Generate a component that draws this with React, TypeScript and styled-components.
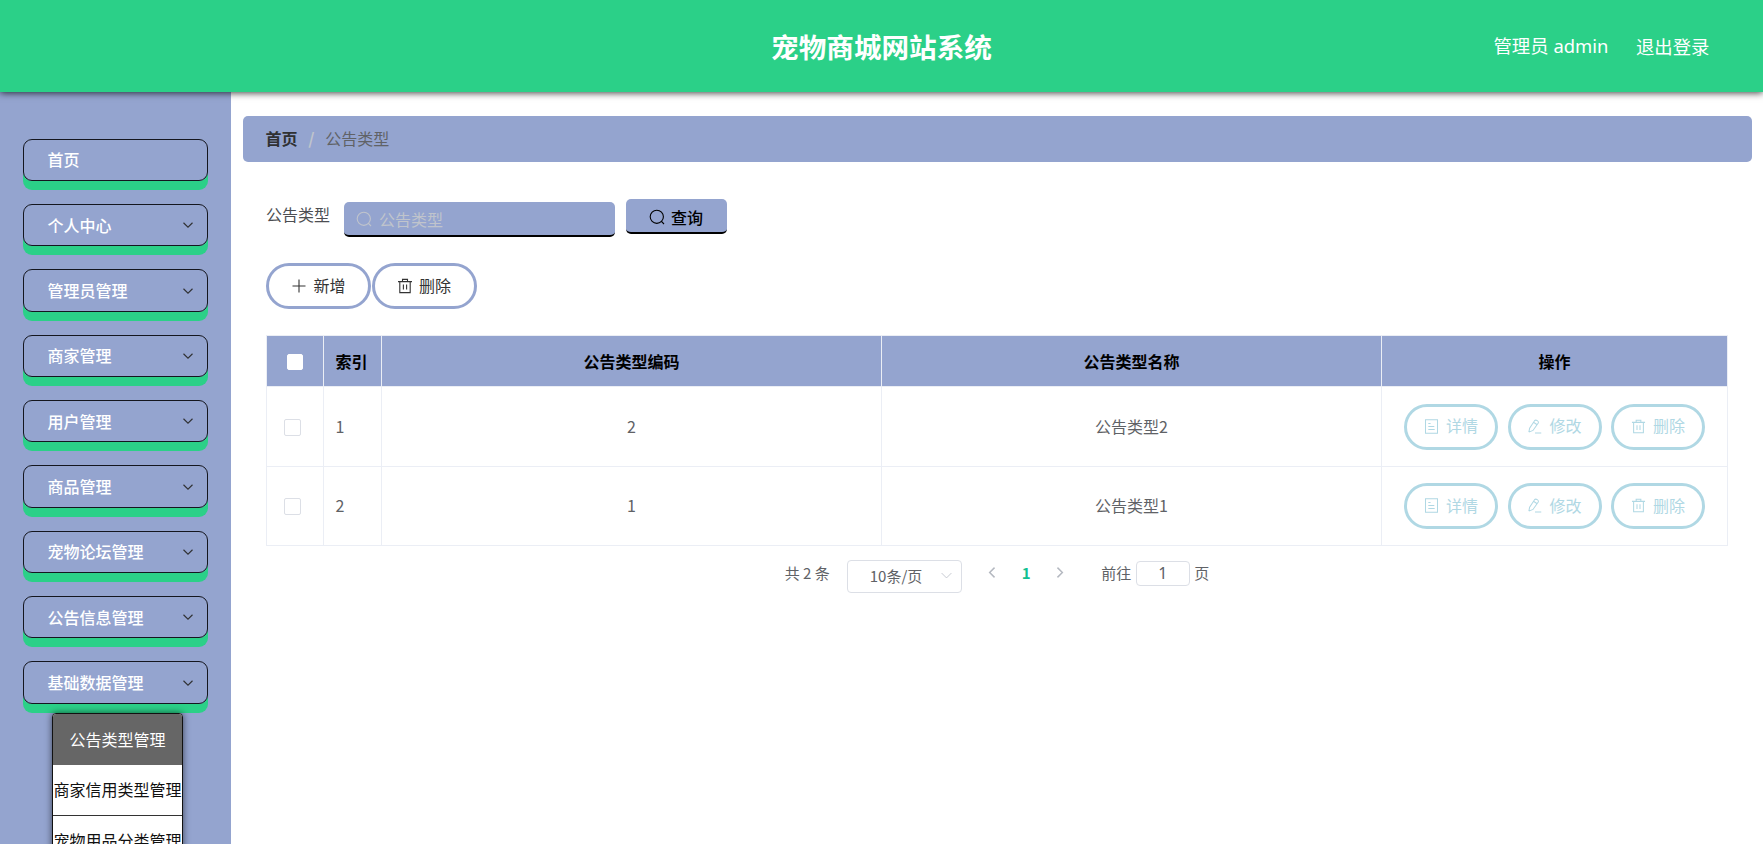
import React from 'react';
import styled, { createGlobalStyle } from 'styled-components';

const BLUE = '#94a4cf';
const GREEN = '#2bd088';
const LIGHT = '#b0d8e4';
const LINE = '#ebeef5';

const GlobalStyle = createGlobalStyle`
  *, *::before, *::after { box-sizing: border-box; }
  html, body { margin: 0; height: 100%; overflow: hidden; background: #fff; }
  body { font-family: "Noto Sans CJK SC", "Noto Sans", sans-serif; font-size: 16px; color: #606266; }
  button, input { font: inherit; color: inherit; }
`;

const Page = styled.div`
  height: 844px;
  display: flex;
  flex-direction: column;
  overflow: hidden;
`;

const Header = styled.header`
  flex: none;
  height: 92px;
  display: grid;
  grid-template-columns: 1fr auto 1fr;
  align-items: center;
  padding: 0 53px;
  background: ${GREEN};
  color: #fff;
  box-shadow: 0 1px 7px rgba(0, 0, 0, 0.75);
  z-index: 2;
`;

const Title = styled.h1`
  grid-column: 2;
  margin: 0;
  font-size: 27.6px;
  line-height: 40px;
  font-weight: 700;
`;

const Account = styled.div`
  display: flex;
  justify-content: flex-end;
  gap: 27.6px;
  padding-right: 0.5px;
  padding-bottom: 1px;
  font-size: 18.4px;
  line-height: 28px;
`;

const UserName = styled.span`
  font-family: "Noto Sans", "Noto Sans CJK SC", sans-serif;
`;

const Body = styled.div`
  flex: 1;
  min-height: 0;
  display: flex;
`;

const Sidebar = styled.nav`
  flex: none;
  width: 231px;
  padding: 46.6px 23px 0;
  background: ${BLUE};
  overflow: hidden;
`;

const MenuItem = styled.div`
  display: flex;
  align-items: center;
  justify-content: space-between;
  height: 42.5px;
  margin-bottom: 22.84px;
  padding: 0 13px 1px 23.5px;
  border: 1px solid #14161f;
  border-radius: 9px;
  box-shadow: 0 9px 0 ${GREEN};
  color: #fff;
  font-weight: 500;
  line-height: 24px;
`;

const SubMenu = styled.div`
  width: 131px;
  margin: -13.4px 0 0 29px;
  border: 1px solid #111;
  border-radius: 4px 4px 0 0;
  background: #fff;
  box-shadow: 0 0 7px rgba(0, 0, 0, 0.6);
  overflow: hidden;
  position: relative;
`;

const SubItem = styled.div<{ $active?: boolean }>`
  display: flex;
  align-items: center;
  justify-content: center;
  height: ${p => (p.$active ? 51 : 50.5)}px;
  padding-bottom: 1px;
  border-bottom: ${p => (p.$active ? 'none' : '1px solid #333')};
  background: ${p => (p.$active ? '#666' : '#fff')};
  color: ${p => (p.$active ? '#fff' : '#111')};
  white-space: nowrap;
`;

const Main = styled.main`
  flex: 1;
  min-width: 0;
  padding: 23.5px 11px 0 12px;
`;

const Breadcrumb = styled.div`
  display: flex;
  align-items: center;
  height: 46px;
  padding: 0 22.6px 1.5px;
  border-radius: 5px;
  background: ${BLUE};
`;

const Crumb = styled.span<{ $home?: boolean }>`
  font-weight: ${p => (p.$home ? 700 : 400)};
  color: ${p => (p.$home ? '#303133' : '#606266')};
`;

const Slash = styled.span`
  width: 27.6px;
  text-align: center;
  font-weight: 700;
  color: #c0c4cc;
`;

const Content = styled.section`
  padding: 36.5px 24px 0 23px;
`;

const SearchRow = styled.div`
  display: flex;
  align-items: flex-start;
  height: 65px;
`;

const Label = styled.label`
  width: 78px;
  padding-top: 4.2px;
  line-height: 24px;
  color: #4c4e52;
`;

const SearchBox = styled.div`
  display: flex;
  align-items: center;
  gap: 7px;
  width: 271px;
  height: 35px;
  margin: 4px 11px 0 0;
  padding: 0 12px;
  border-bottom: 2px solid #000;
  border-radius: 5px;
  background: ${BLUE};
  color: #c0c4cc;
`;

const SearchInput = styled.input`
  flex: 1;
  min-width: 0;
  padding: 0;
  border: 0;
  outline: 0;
  background: transparent;
  &::placeholder { color: #c0c4cc; opacity: 1; }
`;

const QueryButton = styled.button`
  display: flex;
  align-items: center;
  justify-content: center;
  gap: 6px;
  width: 101px;
  height: 35px;
  margin-top: 0.5px;
  padding: 4px 1px 0 0;
  border: 0;
  border-bottom: 2px solid #000;
  border-radius: 5px;
  background: ${BLUE};
  color: #000;
  font-weight: 500;
`;

const Toolbar = styled.div`
  display: flex;
  gap: 0.5px;
  height: 72px;
`;

const PillButton = styled.button<{ $light?: boolean }>`
  display: flex;
  align-items: center;
  justify-content: center;
  gap: ${p => (p.$light ? 7 : 6)}px;
  width: ${p => (p.$light ? 94 : 105)}px;
  height: 46px;
  padding: 0 0 2.5px;
  border: 3px solid ${p => (p.$light ? LIGHT : BLUE)};
  border-radius: 23px;
  background: #fff;
  color: ${p => (p.$light ? LIGHT : '#333')};

  svg { margin-top: 2px; }
`;

const Table = styled.div`
  border-left: 1px solid ${LINE};
  border-right: 1px solid ${LINE};
  border-top: 1px solid ${LINE};
`;

const Row = styled.div<{ $head?: boolean }>`
  display: grid;
  grid-template-columns: 57px 58px 500px 500px 1fr;
  height: ${p => (p.$head ? 51 : 79.5)}px;
  background: ${p => (p.$head ? BLUE : '#fff')};
  color: ${p => (p.$head ? '#000' : '#606266')};
  font-weight: ${p => (p.$head ? 700 : 400)};
`;

const Cell = styled.div<{ $left?: boolean }>`
  display: flex;
  align-items: center;
  justify-content: ${p => (p.$left ? 'flex-start' : 'center')};
  padding: 0 ${p => (p.$left ? 11.5 : 0)}px 1px;
  border-right: 1px solid ${LINE};
  border-bottom: 1px solid ${LINE};
  &:last-child { border-right: 0; }
`;

const Actions = styled.div`
  display: flex;
  gap: 9.5px;
  padding-top: 1.5px;
`;

const Check = styled.span<{ $head?: boolean }>`
  width: ${p => (p.$head ? 16 : 17)}px;
  height: ${p => (p.$head ? 16 : 17)}px;
  margin: ${p => (p.$head ? '3px 0 0 0' : '3px 5px 0 0')};
  border: 1px solid ${p => (p.$head ? '#fff' : '#dcdfe6')};
  border-radius: 2px;
  background: #fff;
`;

const Pagination = styled.div`
  display: flex;
  justify-content: center;
  align-items: flex-start;
  padding: 13.5px 0 0 0;
  font-size: 15px;
  line-height: 26px;
`;

const Total = styled.span`
  width: 62.5px;
`;

const SizeSelect = styled.div`
  display: flex;
  align-items: center;
  justify-content: space-between;
  width: 115px;
  height: 33px;
  padding: 0 8px 1px 21.5px;
  border: 1px solid #dcdfe6;
  border-radius: 4px;
  color: #606266;

  svg { color: #c0c4cc; }
`;

const Pager = styled.div`
  display: flex;
  align-items: center;
  justify-content: space-between;
  width: 80px;
  height: 26px;
  margin: 0 35px 0 24px;
  color: #b4b8c0;
`;

const CurrentPage = styled.b`
  color: #13c091;
`;

const PageInput = styled.input`
  width: 54px;
  height: 25px;
  margin: 1px 4.5px 0 4.5px;
  padding: 0;
  border: 1px solid #dcdfe6;
  border-radius: 4px;
  text-align: center;
  font-family: "Noto Sans", sans-serif;
  font-size: 16px;
`;

type IconName = 'search' | 'plus' | 'trash' | 'doc' | 'edit' | 'down' | 'left' | 'right';

const paths: Record<IconName, React.ReactNode> = {
  search: (
    <>
      <circle cx="7.8" cy="7.8" r="6.6" />
      <path d="M12.2 12.2L15 15" />
    </>
  ),
  plus: <path d="M8 1.5V14.5M1.5 8H14.5" />,
  trash: <path d="M1 3.6H15M5.5 3.6V1.4H10.5V3.6M2.8 3.6V14.6H13.2V3.6M6.4 6.6V11.6M9.6 6.6V11.6" />,
  doc: <path d="M1.6 .8H14.4V15.2H1.6ZM4.6 4.7H7M4.6 8H11M4.6 11.3H11.4" />,
  edit: <path d="M2 14L2.8 9.8L8.2 1.6C9.6 .4 12.8 2.4 12 4.2L6.4 12.2L2 14M7 3.5L10.8 6.1M8.5 15H15.2" />,
  down: <path d="M2 5L8 11L14 5" />,
  left: <path d="M10.5 2L4.5 8L10.5 14" />,
  right: <path d="M5.5 2L11.5 8L5.5 14" />,
};

function Icon({ name, size = 16, stroke = 1.1 }: { name: IconName; size?: number; stroke?: number }) {
  return (
    <svg width={size} height={size} viewBox="0 0 16 16" fill="none" stroke="currentColor" strokeWidth={stroke}>
      {paths[name]}
    </svg>
  );
}

const MenuArrow = styled.span`
  display: flex;
  padding-top: 1.5px;
  color: #303133;
`;

const menu = ['首页', '个人中心', '管理员管理', '商家管理', '用户管理', '商品管理', '宠物论坛管理', '公告信息管理', '基础数据管理'];
const subMenu = ['公告类型管理', '商家信用类型管理', '宠物用品分类管理'];
const rows = [
  { index: 1, code: 2, name: '公告类型2' },
  { index: 2, code: 1, name: '公告类型1' },
];

export default function App() {
  return (
    <Page>
      <GlobalStyle />
      <Header>
        <Title>宠物商城网站系统</Title>
        <Account>
          <UserName>管理员 admin</UserName>
          <span>退出登录</span>
        </Account>
      </Header>
      <Body>
        <Sidebar>
          {menu.map((label, i) => (
            <MenuItem key={label}>
              <span>{label}</span>
              {i > 0 && <MenuArrow><Icon name="down" size={12} stroke={1.5} /></MenuArrow>}
            </MenuItem>
          ))}
          <SubMenu>
            {subMenu.map((label, i) => (
              <SubItem key={label} $active={i === 0}>{label}</SubItem>
            ))}
          </SubMenu>
        </Sidebar>
        <Main>
          <Breadcrumb>
            <Crumb $home>首页</Crumb>
            <Slash>/</Slash>
            <Crumb>公告类型</Crumb>
          </Breadcrumb>
          <Content>
            <SearchRow>
              <Label>公告类型</Label>
              <SearchBox>
                <Icon name="search" />
                <SearchInput placeholder="公告类型" />
              </SearchBox>
              <QueryButton><Icon name="search" />查询</QueryButton>
            </SearchRow>
            <Toolbar>
              <PillButton><Icon name="plus" />新增</PillButton>
              <PillButton><Icon name="trash" />删除</PillButton>
            </Toolbar>
            <Table>
              <Row $head>
                <Cell><Check $head /></Cell>
                <Cell $left>索引</Cell>
                <Cell>公告类型编码</Cell>
                <Cell>公告类型名称</Cell>
                <Cell>操作</Cell>
              </Row>
              {rows.map(row => (
                <Row key={row.index}>
                  <Cell><Check /></Cell>
                  <Cell $left>{row.index}</Cell>
                  <Cell>{row.code}</Cell>
                  <Cell>{row.name}</Cell>
                  <Cell>
                    <Actions>
                      <PillButton $light><Icon name="doc" size={15} />详情</PillButton>
                      <PillButton $light><Icon name="edit" size={15} />修改</PillButton>
                      <PillButton $light><Icon name="trash" size={15} />删除</PillButton>
                    </Actions>
                  </Cell>
                </Row>
              ))}
            </Table>
            <Pagination>
              <Total>共 2 条</Total>
              <SizeSelect>10条/页<Icon name="down" size={13} /></SizeSelect>
              <Pager>
                <Icon name="left" size={13} stroke={1.8} />
                <CurrentPage>1</CurrentPage>
                <Icon name="right" size={13} stroke={1.8} />
              </Pager>
              <span>前往</span>
              <PageInput defaultValue="1" />
              <span>页</span>
            </Pagination>
          </Content>
        </Main>
      </Body>
    </Page>
  );
}
